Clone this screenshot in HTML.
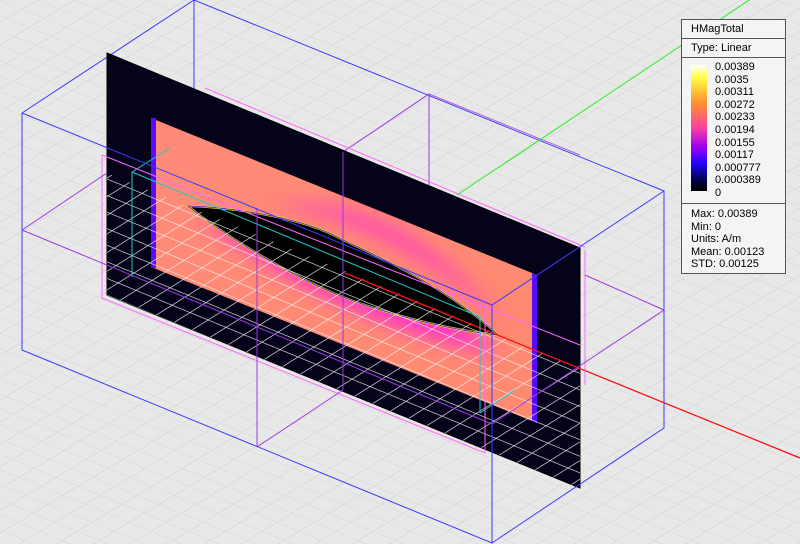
<!DOCTYPE html>
<html><head><meta charset="utf-8"><style>
html,body{margin:0;padding:0;width:800px;height:544px;overflow:hidden;background:#e8e8e8;font-family:"Liberation Sans",sans-serif}
#leg{position:absolute;left:681px;top:19px;width:103px;height:253px;background:#f4f4f4;border:1px solid #555;font-size:11px;color:#000}
.row{border-bottom:1px solid #555;padding-left:9px}
.lab{position:absolute;left:33px;line-height:12.6px;top:42px}
</style></head><body>
<svg width="800" height="544" style="position:absolute;left:0;top:0">
<defs>
<pattern id="bg" width="1" height="1" patternUnits="userSpaceOnUse" patternTransform="matrix(22 9 -15 9 0 0)">
<path d="M0 0H1M0 0V1" stroke="#d2d2d2" stroke-width="0.06" fill="none"/>
</pattern>
<pattern id="pg" width="1" height="1" patternUnits="userSpaceOnUse" patternTransform="matrix(18 7.4 -16 10 0 2)">
<path d="M0 0H1M0 0V1" stroke="#f0f0f0" stroke-width="0.08" fill="none"/>
</pattern>
<linearGradient id="sal" x1="0" y1="0" x2="1" y2="1">
<stop offset="0" stop-color="#ff8a78"/><stop offset="1" stop-color="#ff8a70"/>
</linearGradient>
<filter id="bl"><feGaussianBlur stdDeviation="9"/></filter>
<clipPath id="sc"><polygon points="156,118 532,273 532,423 156,267"/></clipPath>
<clipPath id="gc"><polygon points="107,173 580,368 580,488 107,295"/></clipPath>
</defs>
<rect width="800" height="544" fill="url(#bg)"/>
<g fill="none" stroke-width="1">
<path d="M22 113L194 0M194 0V90M194 0L664 191" stroke="#3a3aff"/>
<path d="M343 152L429 94V185" stroke="#9a3ae0"/>
<path d="M429 94L580 155" stroke="#b060e0"/>
<path d="M205 88L585 247" stroke="#ff66ff"/>
<path d="M457 195L640 73L800 -34" stroke="#22ee22"/>
</g>
<polygon points="107,53 580,248 580,488 107,295" fill="#04031a" stroke="#000"/>
<polygon points="151,118 537,275 537,423 151,267" fill="url(#sal)"/>
<g clip-path="url(#sc)">
<path d="M200 220 C260 255 330 320 500 355 C430 290 340 240 200 220Z" fill="#ff30c8" filter="url(#bl)"/>
<path d="M270 205 C340 212 430 255 505 325 C430 225 340 195 270 205Z" fill="#ff40c0" filter="url(#bl)" opacity="0.9"/>
</g>
<rect x="151" y="118" width="5" height="150" fill="#5a0aff"/>
<polygon points="532,273 537,275 537,423 532,421" fill="#5a0aff"/>
<path d="M188 206 C220 207 300 215 343 240 C390 262 450 290 498 335 C450 330 390 315 343 297 C300 280 230 240 188 206Z" fill="#000" stroke="#ffd400" stroke-width="2"/>
<path d="M188 206 C220 207 300 215 343 240 C390 262 450 290 498 335 C450 330 390 315 343 297 C300 280 230 240 188 206Z" fill="none" stroke="#2020ff" stroke-width="0.8"/>
<rect x="0" y="0" width="800" height="544" fill="url(#pg)" clip-path="url(#gc)"/>
<g fill="none" stroke-width="1">
<path d="M345 273L800 458" stroke="#ff1010" stroke-width="1.3"/>
<path d="M132 172V277M132 172L480 317V413M132 172L170 148M480 413L515 390" stroke="#20c8c8"/>
<path d="M102 155V298L485 453V300M102 155L580 345M585 250V385" stroke="#ff66ff"/>
<path d="M22 230L107 173M22 230L492 424L664 310M257 208V447M343 152V390M257 447L343 390M585 275L664 310" stroke="#9a3ae0"/>
<path d="M22 113V350L492 543V305L22 113M492 305L664 191V428L492 543" stroke="#3a3aff"/>
</g>
</svg>
<div id="leg">
<div class="row" style="height:18px;line-height:18px">HMagTotal</div>
<div class="row" style="height:18px;line-height:18px">Type: Linear</div>
<div class="row" style="height:145px;position:relative">
<div style="position:absolute;left:9px;top:7px;width:16px;height:126px;background:linear-gradient(#ffffff,#ffff40 10%,#ff9030 30%,#ff40a0 50%,#a000f0 65%,#2000ff 78%,#000040 92%,#000)"></div>
<div class="lab" style="top:3px">0.00389<br>0.0035<br>0.00311<br>0.00272<br>0.00233<br>0.00194<br>0.00155<br>0.00117<br>0.000777<br>0.000389<br>0</div>
</div>
<div style="padding-left:9px;padding-top:4px;line-height:12.6px">Max: 0.00389<br>Min: 0<br>Units: A/m<br>Mean: 0.00123<br>STD: 0.00125</div>
</div>
</body></html>
